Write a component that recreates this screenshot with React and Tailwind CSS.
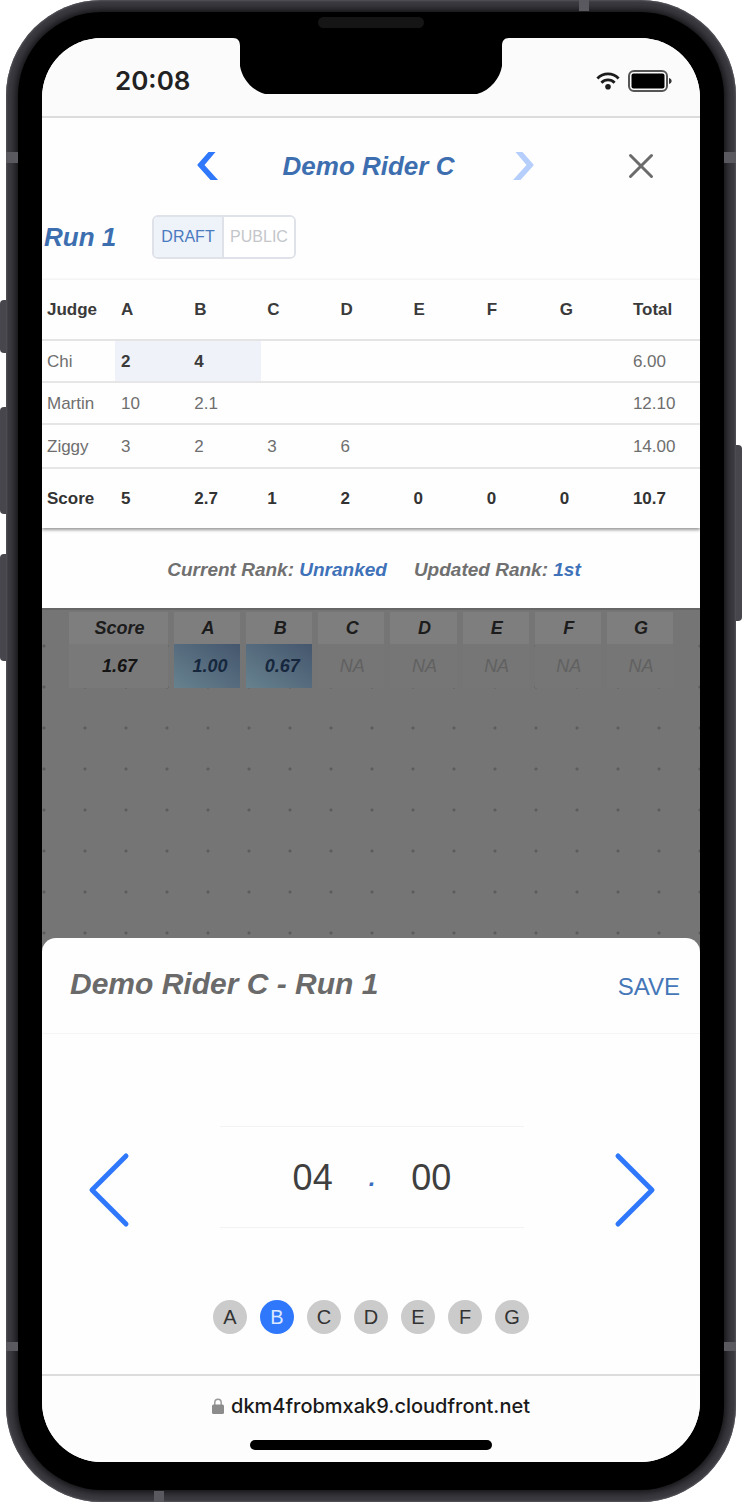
import React, { useState } from "react";

const CATEGORIES = ["A", "B", "C", "D", "E", "F", "G"];

const JUDGES = [
  { name: "Chi", marks: ["2", "4", "", "", "", "", ""], total: "6.00", active: true },
  { name: "Martin", marks: ["10", "2.1", "", "", "", "", ""], total: "12.10" },
  { name: "Ziggy", marks: ["3", "2", "3", "6", "", "", ""], total: "14.00" },
];

const SCORES = ["5", "2.7", "1", "2", "0", "0", "0"];
const OVERVIEW = ["1.00", "0.67", "NA", "NA", "NA", "NA", "NA"];

function Notch() {
  return (
    <svg
      className="absolute left-1/2 top-0 h-14 w-[276px] -translate-x-1/2"
      viewBox="0 0 276 56"
      aria-hidden="true"
    >
      <path
        d="M0 0 C5 0 7 3 7 8 V28 C9 40 18 52 32 56 H244 C258 52 267 40 269 28 V8 C269 3 271 0 276 0 Z"
        fill="#000"
      />
    </svg>
  );
}

function StatusBar() {
  return (
    <div className="relative flex h-20 items-center justify-between border-b-2 border-[#dcdcdc] bg-[#fbfbfb] pl-[73px] pr-7 pt-2">
      <Notch />
      <span className="font-['Inter',sans-serif] text-[26px] font-semibold leading-8 text-[#222]">20:08</span>
      <div className="flex items-center gap-2">
        <svg className="h-[18px] w-6" viewBox="0 0 24 18" aria-hidden="true">
          <g fill="none" stroke="#1c1c1c" strokeWidth="2.8">
            <path d="M1.400 6.400 C7.400 0.400 16.600 0.400 22.600 6.400" />
            <path d="M5.400 10.800 C9.200 7 14.800 7 18.600 10.800" />
          </g>
          <circle cx="12" cy="14.800" r="2.800" fill="#1c1c1c" />
        </svg>
        <svg className="h-[22px] w-11" viewBox="0 0 44 22" aria-hidden="true">
          <rect x="1" y="1" width="38" height="20" rx="5" fill="none" stroke="#555" strokeWidth="2" />
          <rect x="3.500" y="3.500" width="33" height="15" rx="2" fill="#000" />
          <path d="M41 8 C44.500 9 44.500 13 41 14 Z" fill="#333" />
        </svg>
      </div>
    </div>
  );
}

function RiderNav() {
  return (
    <div className="grid h-[95px] grid-cols-[154fr_339fr_165fr] items-center">
      <span />
      <div className="flex items-center justify-between">
        <button type="button" aria-label="Previous rider">
          <svg className="h-7 w-[22px]" viewBox="0 0 22 28" aria-hidden="true">
            <path d="M12.500 0 H19.500 L8.500 13 L22 28 H14.500 L1.500 13.500 V12.500 Z" fill="#2f78fb" />
          </svg>
        </button>
        <h1 className="whitespace-nowrap pl-1.5 text-[26px] font-bold italic leading-8 text-[#3d6fb0]">Demo Rider C</h1>
        <button type="button" aria-label="Next rider">
          <svg className="h-7 w-[22px]" viewBox="0 0 22 28" aria-hidden="true">
            <path d="M9.500 0 H2.500 L13.500 13 L0 28 H7.500 L20.500 13.500 V12.500 Z" fill="#b5cefc" />
          </svg>
        </button>
      </div>
      <div className="flex justify-end pr-[46px]">
        <button type="button" aria-label="Close">
          <svg className="h-[26px] w-[26px]" viewBox="0 0 26 26" aria-hidden="true">
            <path d="M2.500 2.500 L23.500 23.500 M23.500 2.500 L2.500 23.500" stroke="#6b6b6b" strokeWidth="3" strokeLinecap="round" />
          </svg>
        </button>
      </div>
    </div>
  );
}

function RunHeader({ mode, onMode }) {
  const on = "bg-[#eef2f9] text-[#4a7abf]";
  const off = "bg-white text-[#c4c6ca]";
  return (
    <div className="flex h-12 items-center gap-9 pl-0.5">
      <h2 className="w-[72px] whitespace-nowrap text-[26px] font-bold italic leading-8 text-[#3d6fb0]">Run 1</h2>
      <div className="flex h-11 overflow-hidden rounded-md border-2 border-[#dfe2e8] text-base">
        <button
          type="button"
          aria-pressed={mode === "draft"}
          onClick={() => onMode("draft")}
          className={`w-[70px] border-r-2 border-[#dfe2e8] ${mode === "draft" ? on : off}`}
        >
          DRAFT
        </button>
        <button
          type="button"
          aria-pressed={mode === "public"}
          onClick={() => onMode("public")}
          className={`w-[70px] ${mode === "public" ? on : off}`}
        >
          PUBLIC
        </button>
      </div>
    </div>
  );
}

function JudgeTable() {
  return (
    <table className="mt-[18px] w-full table-fixed border-collapse border-t border-[#f4f4f4] text-left text-[17px] leading-5 shadow-[0_2px_3px_rgba(0,0,0,0.4)]">
      <thead>
        <tr className="h-[60px] border-b-2 border-[#e4e4e4] text-[#3a3a3a]">
          <th scope="col" className="pl-[5px] pt-0.5 font-bold">Judge</th>
          {CATEGORIES.map((c) => (
            <th key={c} scope="col" className="pl-1.5 pt-0.5 font-bold">{c}</th>
          ))}
          <th scope="col" className="pl-1.5 pt-0.5 font-bold">Total</th>
        </tr>
      </thead>
      <tbody>
        {JUDGES.map((j) => (
          <tr key={j.name} className="h-[42px] border-b-2 border-[#e6e6e6] text-[#6e6e6e] last:h-11">
            <th scope="row" className="pl-[5px] pt-0.5 font-normal">{j.name}</th>
            {j.marks.map((m, i) => (
              <td
                key={CATEGORIES[i]}
                className={j.active && m ? "bg-[#eff2f8] pl-1.5 pt-0.5 font-bold text-[#3a3a3a]" : "pl-1.5 pt-0.5"}
              >
                {m}
              </td>
            ))}
            <td className="pl-1.5 pt-0.5">{j.total}</td>
          </tr>
        ))}
      </tbody>
      <tfoot>
        <tr className="h-[60px] text-[#333]">
          <th scope="row" className="pl-[5px] pt-0.5 font-bold">Score</th>
          {SCORES.map((s, i) => (
            <td key={CATEGORIES[i]} className="pl-1.5 pt-0.5 font-bold">{s}</td>
          ))}
          <td className="pl-1.5 pt-0.5 font-bold">10.7</td>
        </tr>
      </tfoot>
    </table>
  );
}

function Overview() {
  return (
    <div className="h-[330px] border-t-2 border-[#666] bg-[#757575] bg-[radial-gradient(circle_at_2px_2px,#5c5c5c_1px,transparent_2px)] bg-[length:41px_41px] bg-[position:0px_-7px] px-[21px] pt-0.5">
      <table className="w-full table-fixed border-separate border-spacing-x-1.5 border-spacing-y-0 text-center text-lg italic leading-6">
        <thead>
          <tr className="h-8 text-[#1c1c1c]">
            <th scope="col" className="w-[99px] bg-[#7e7e7e] pl-0.5 font-bold">Score</th>
            {CATEGORIES.map((c) => (
              <th key={c} scope="col" className="bg-[#7e7e7e] pl-0.5 font-bold">{c}</th>
            ))}
          </tr>
        </thead>
        <tbody>
          <tr className="h-11">
            <td className="bg-[#797979] pl-0.5 font-bold text-[#141414]">1.67</td>
            {OVERVIEW.map((v, i) => (
              <td
                key={CATEGORIES[i]}
                className={
                  v === "NA"
                    ? "bg-[#767676] pl-0.5 text-[#616161]"
                    : "bg-linear-to-tr from-[#67828f] to-[#45566d] pl-1.5 font-bold text-[#16273d]"
                }
              >
                {v}
              </td>
            ))}
          </tr>
        </tbody>
      </table>
    </div>
  );
}

function ScoreSheet({ selected, onSelect }) {
  return (
    <div className="bg-[#757575]">
      <section className="rounded-t-[14px] bg-[#fefefe]">
        <div className="flex h-24 items-center justify-between border-b border-[#f5f5f5] pl-7 pr-5">
          <h2 className="whitespace-nowrap pb-0.5 text-[30px] font-bold italic leading-9 text-[#6a6a6a]">Demo Rider C - Run 1</h2>
          <button type="button" className="pt-1 text-2xl text-[#4577b8]">SAVE</button>
        </div>
        <div className="flex items-center justify-between pl-[46px] pr-11 pt-[92px]">
          <button type="button" aria-label="Previous category" className="pt-[26px]">
            <svg className="h-[76px] w-[42px]" viewBox="0 0 42 76" aria-hidden="true">
              <path d="M38 4 L4 38 L38 72" fill="none" stroke="#2f78fb" strokeWidth="5" strokeLinecap="round" strokeLinejoin="round" />
            </svg>
          </button>
          <div className="flex h-[102px] w-[304px] items-center justify-center gap-9 border-y border-[#f3f3f3] pt-0.5 text-4xl text-[#3f3f3f]">
            <span>04</span>
            <span className="text-2xl font-bold italic text-[#3a6cc0]">.</span>
            <span>00</span>
          </div>
          <button type="button" aria-label="Next category" className="pt-[26px]">
            <svg className="h-[76px] w-[42px]" viewBox="0 0 42 76" aria-hidden="true">
              <path d="M4 4 L38 38 L4 72" fill="none" stroke="#2f78fb" strokeWidth="5" strokeLinecap="round" strokeLinejoin="round" />
            </svg>
          </button>
        </div>
        <div className="flex justify-center gap-[13px] pb-10 pt-[72px]">
          {CATEGORIES.map((c) => (
            <button
              key={c}
              type="button"
              aria-pressed={c === selected}
              onClick={() => onSelect(c)}
              className={`flex size-[34px] items-center justify-center rounded-full text-xl ${
                c === selected ? "bg-[#2f78fb] text-[#dce8ff]" : "bg-[#cbcbcb] text-[#333]"
              }`}
            >
              {c}
            </button>
          ))}
        </div>
      </section>
    </div>
  );
}

function BrowserBar() {
  return (
    <div className="flex flex-col items-center border-t-2 border-[#dcdcdc] bg-[#fdfdfd] pb-3 pt-3.5">
      <div className="flex items-center gap-[7px]">
        <svg className="h-4 w-3" viewBox="0 0 12 16" aria-hidden="true">
          <path d="M2.800 8 V4.500 C2.800 0 9.200 0 9.200 4.500 V8" fill="none" stroke="#9a9a9a" strokeWidth="1.500" />
          <rect x="0" y="6.500" width="12" height="9.500" rx="1.500" fill="#8c8c8c" />
        </svg>
        <span className="font-['Inter',sans-serif] text-[20px] font-medium leading-8 text-[#1a1a1a]">dkm4frobmxak9.cloudfront.net</span>
      </div>
      <span className="mt-[18px] h-2.5 w-[242px] rounded-full bg-black" />
    </div>
  );
}

function FrameDetails() {
  return (
    <div aria-hidden="true">
      <i className="absolute left-0 top-[300px] h-[53px] w-2 rounded-l-sm bg-[#47464c]" />
      <i className="absolute left-0 top-[407px] h-[107px] w-2 rounded-l-sm bg-[#47464c]" />
      <i className="absolute left-0 top-[554px] h-[107px] w-2 rounded-l-sm bg-[#47464c]" />
      <i className="absolute right-0 top-[445px] h-[176px] w-2 rounded-r-sm bg-[#47464c]" />
    </div>
  );
}

function AntennaBands() {
  return (
    <div aria-hidden="true">
      <i className="absolute right-[147px] top-0 h-[11px] w-2.5 bg-[#5a5960]" />
      <i className="absolute left-0 top-[152px] h-[11px] w-3 bg-[#5a5960]" />
      <i className="absolute right-0 top-[152px] h-[11px] w-3 bg-[#5a5960]" />
      <i className="absolute bottom-[151px] left-0 h-[9px] w-3 bg-[#5a5960]" />
      <i className="absolute bottom-[151px] right-0 h-[9px] w-3 bg-[#5a5960]" />
      <i className="absolute bottom-0 left-[148px] h-[11px] w-2.5 bg-[#5a5960]" />
      <i className="absolute left-1/2 top-[17px] h-[11px] w-[106px] -translate-x-1/2 rounded-full bg-[#151515]" />
    </div>
  );
}

export default function App() {
  const [mode, setMode] = useState("draft");
  const [selected, setSelected] = useState("B");
  return (
    <main className="relative mx-auto max-w-[742px] bg-white px-1.5 font-['Liberation_Sans',Arial,sans-serif]">
      <FrameDetails />
      <div className="relative rounded-[96px] bg-[#3d3c42] p-3 shadow-[inset_0_0_2px_1px_#55545a]">
        <div className="rounded-[84px] bg-black px-6 pb-7 pt-[26px] shadow-[0_0_8px_2px_#0c0c0e]">
          <div className="overflow-hidden rounded-[60px] bg-[#fefefe]">
            <StatusBar />
            <RiderNav />
            <RunHeader mode={mode} onMode={setMode} />
            <JudgeTable />
            <p className="flex h-20 items-center justify-center gap-[27px] pl-1.5 pt-1 text-[19px] font-bold italic leading-6 text-[#707070]">
              <span>Current Rank: <span className="text-[#3f72b8]">Unranked</span></span>
              <span>Updated Rank: <span className="text-[#3f72b8]">1st</span></span>
            </p>
            <Overview />
            <ScoreSheet selected={selected} onSelect={setSelected} />
            <BrowserBar />
          </div>
        </div>
        <AntennaBands />
      </div>
    </main>
  );
}
